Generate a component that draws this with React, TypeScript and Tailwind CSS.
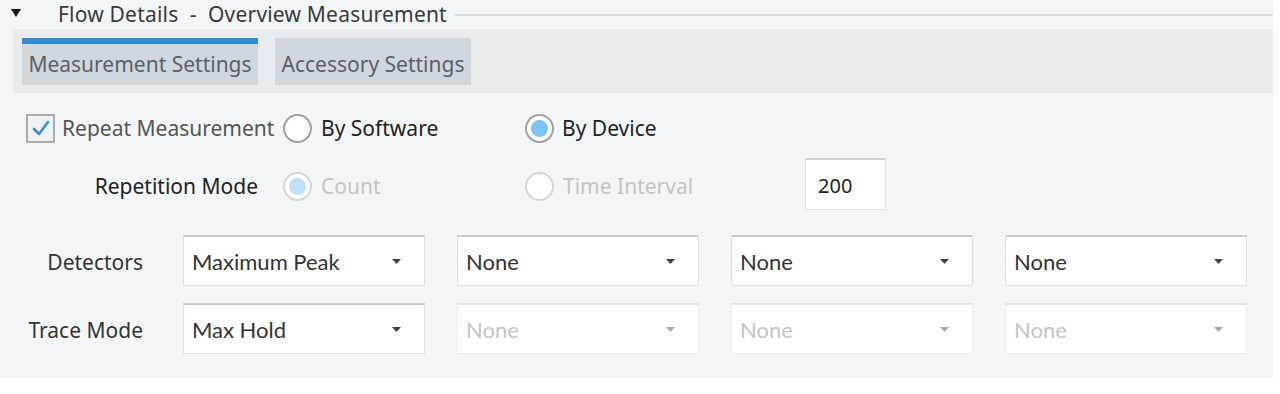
import React from "react";

const labelFont = { fontFamily: '"Noto Sans", "Open Sans", sans-serif' };
const ddFont = { fontFamily: 'Lato, "Noto Sans", sans-serif' };

function Radio({ checked, disabled }: { checked?: boolean; disabled?: boolean }) {
  return (
    <span
      className={`flex h-[29px] w-[29px] shrink-0 items-center justify-center rounded-full border-2 bg-white ${
        disabled ? "border-[#d4d7da]" : "border-[#9ea2a6]"
      }`}
    >
      {checked && (
        <span
          className={`block h-[17px] w-[17px] rounded-full ${disabled ? "bg-[#bfe0f8]" : "bg-[#7cc3f4]"}`}
        />
      )}
    </span>
  );
}

function Caret({ disabled }: { disabled?: boolean }) {
  return (
    <svg width="9" height="5" viewBox="0 0 9 5" className="shrink-0">
      <path d="M0 0 L9 0 L4.5 5 Z" fill={disabled ? "#a8a8a8" : "#444"} />
    </svg>
  );
}

function Dropdown({ value, disabled }: { value: string; disabled?: boolean }) {
  return (
    <div
      className={`flex h-[51px] w-[242px] items-center justify-between border border-t-2 bg-white pl-[8px] pr-[23px] text-[22px] ${
        disabled
          ? "border-[#eceef0] border-t-[#e2e4e6] text-[#c4c4c4]"
          : "border-[#dfe2e5] border-t-[#c9cccf] text-[#333]"
      }`}
      style={ddFont}
    >
      <span>{value}</span>
      <Caret disabled={disabled} />
    </div>
  );
}

export default function App() {
  return (
    <div className="h-[394px] w-[1280px] bg-white" style={labelFont}>
      <div className="h-[378px] w-[1273px] bg-[#f3f6f9]">
        {/* Header */}
        <div className="flex h-[29px] items-center">
          <svg width="10" height="8" viewBox="0 0 10 8" className="ml-[11px] mt-[-3px]">
            <path d="M0 0 L10 0 L5 8 Z" fill="#1a1a1a" />
          </svg>
          <span className="ml-[37px] text-[21px] leading-none tracking-[0.2px] text-[#3a3a3a]">
            Flow Details&nbsp; -&nbsp; Overview Measurement
          </span>
          <div className="ml-[8px] h-[2px] flex-1 bg-[#d9dde0]" />
        </div>

        {/* Tab bar */}
        <div className="ml-[13px] flex h-[64px] w-[1260px] gap-[17px] bg-[#e8ecef] pl-[9px] pt-[9px]">
          <div className="flex h-[47px] w-[236px] flex-col bg-[#d0d8de]">
            <div className="h-[6px] bg-[#2d8bd8]" />
            <div className="flex flex-1 items-center justify-center text-[21px] text-[#5a6066]">
              Measurement Settings
            </div>
          </div>
          <div className="flex h-[47px] w-[196px] items-center justify-center bg-[#d0d8de] pt-[6px] text-[21px] text-[#5a6066]">
            Accessory Settings
          </div>
        </div>

        {/* Repeat row */}
        <div className="mt-[7px] flex h-[56px] items-center text-[21px] text-[#333]">
          <span className="ml-[26px] flex h-[29px] w-[29px] items-center justify-center border-2 border-[#a9adb1] bg-[#eef3f8]">
            <svg width="18" height="16" viewBox="0 0 18 16">
              <path d="M2 9 L7 14 L16 2" fill="none" stroke="#3a8fd9" strokeWidth="2.6" strokeLinecap="round" strokeLinejoin="round" />
            </svg>
          </span>
          <span className="ml-[7px] w-[221px] pt-[2px] text-[#555]">Repeat Measurement</span>
          <Radio />
          <span className="ml-[9px] w-[204px] pt-[2px] text-[#222]">By Software</span>
          <Radio checked />
          <span className="ml-[8px] pt-[2px] text-[#222]">By Device</span>
        </div>

        {/* Repetition mode row */}
        <div className="mt-[2px] flex h-[52px] items-center text-[21px]">
          <span className="w-[258px] pt-[5px] text-right text-[#222]">Repetition Mode</span>
          <span className="ml-[25px] pt-[4px]"><Radio checked disabled /></span>
          <span className="ml-[9px] w-[204px] pt-[5px] text-[#c2c4c6]">Count</span>
          <span className="pt-[4px]"><Radio disabled /></span>
          <span className="ml-[9px] w-[242px] pt-[5px] text-[#c2c4c6]">Time Interval</span>
          <div className="flex h-[52px] w-[81px] items-center border border-t-2 border-[#e0e2e4] border-t-[#cfd2d5] bg-white pl-[12px] pt-[2px] text-[20px] text-[#222]">
            200
          </div>
        </div>

        {/* Detectors */}
        <div className="mt-[25px] flex h-[51px] items-center text-[21px]">
          <span className="w-[143px] pt-[4px] text-right text-[#333]">Detectors</span>
          <div className="ml-[40px] flex gap-[32px]">
            <Dropdown value="Maximum Peak" />
            <Dropdown value="None" />
            <Dropdown value="None" />
            <Dropdown value="None" />
          </div>
        </div>

        {/* Trace mode */}
        <div className="mt-[17px] flex h-[51px] items-center text-[21px]">
          <span className="w-[143px] pt-[4px] text-right text-[#333]">Trace Mode</span>
          <div className="ml-[40px] flex gap-[32px]">
            <Dropdown value="Max Hold" />
            <Dropdown value="None" disabled />
            <Dropdown value="None" disabled />
            <Dropdown value="None" disabled />
          </div>
        </div>
      </div>
    </div>
  );
}
